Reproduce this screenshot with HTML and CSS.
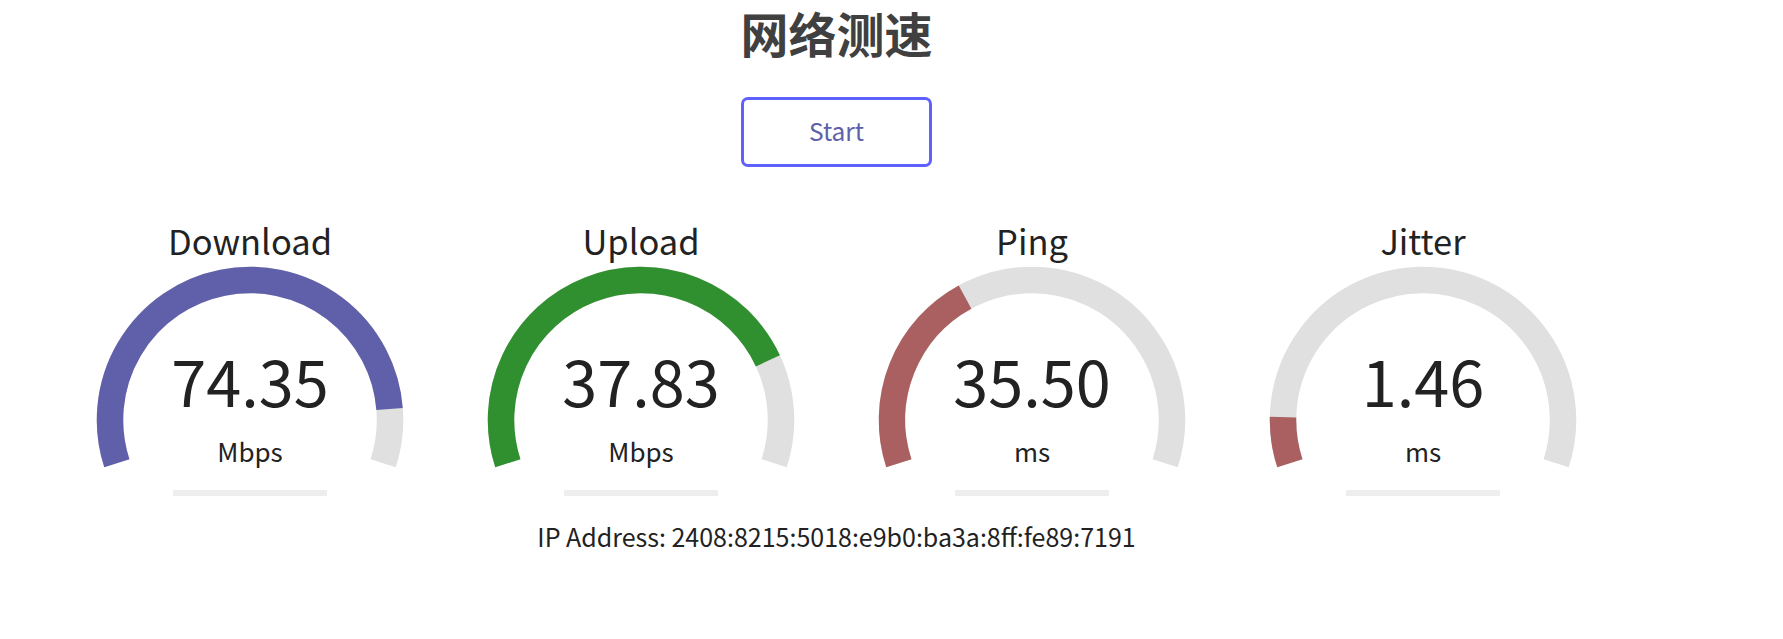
FILE: index.html
```html
<!DOCTYPE html>
<html lang="zh-CN">
<head>
<meta charset="utf-8">
<title>网络测速</title>
<link rel="stylesheet" href="styles.css">
</head>
<body>
<main class="page">
  <h1 class="title">网络测速</h1>
  <div class="start-btn">Start</div>
  <section class="tests">
    <div class="test">
      <div class="test-name">Download</div>
      <div class="meter">
        <svg class="gauge" viewBox="0 0 310 215" width="310" height="215">
          <path class="track" d="M21.85 204.26 A140 140 0 1 1 288.15 204.26"/>
          <path class="fill dl" d="M21.85 204.26 A140 140 0 1 1 294.57 150.04"/>
        </svg>
        <div class="readout">
          <div class="value">74.35</div>
          <div class="unit">Mbps</div>
        </div>
      </div>
      <div class="progress"></div>
    </div>
    <div class="test">
      <div class="test-name">Upload</div>
      <div class="meter">
        <svg class="gauge" viewBox="0 0 310 215" width="310" height="215">
          <path class="track" d="M21.85 204.26 A140 140 0 1 1 288.15 204.26"/>
          <path class="fill ul" d="M21.85 204.26 A140 140 0 0 1 281.87 101.82"/>
        </svg>
        <div class="readout">
          <div class="value">37.83</div>
          <div class="unit">Mbps</div>
        </div>
      </div>
      <div class="progress"></div>
    </div>
    <div class="test">
      <div class="test-name">Ping</div>
      <div class="meter">
        <svg class="gauge" viewBox="0 0 310 215" width="310" height="215">
          <path class="track" d="M21.85 204.26 A140 140 0 1 1 288.15 204.26"/>
          <path class="fill ping" d="M21.85 204.26 A140 140 0 0 1 88.08 38.03"/>
        </svg>
        <div class="readout">
          <div class="value">35.50</div>
          <div class="unit">ms</div>
        </div>
      </div>
      <div class="progress"></div>
    </div>
    <div class="test">
      <div class="test-name">Jitter</div>
      <div class="meter">
        <svg class="gauge" viewBox="0 0 310 215" width="310" height="215">
          <path class="track" d="M21.85 204.26 A140 140 0 1 1 288.15 204.26"/>
          <path class="fill ping" d="M21.85 204.26 A140 140 0 0 1 15.03 158.12"/>
        </svg>
        <div class="readout">
          <div class="value">1.46</div>
          <div class="unit">ms</div>
        </div>
      </div>
      <div class="progress"></div>
    </div>
  </section>
  <div class="ip">IP Address: 2408:8215:5018:e9b0:ba3a:8ff:fe89:7191</div>
</main>
</body>
</html>
```

FILE: styles.css
```css
html, body {
  margin: 0;
  padding: 0;
  background: #ffffff;
}

body {
  font-family: "Noto Sans CJK SC", "Noto Sans", sans-serif;
  color: #222222;
}

.page {
  width: 1673px;
  display: flex;
  flex-direction: column;
  align-items: center;
  text-align: center;
}

.title {
  margin: 0;
  font-size: 48px;
  line-height: 64px;
  font-weight: 700;
  color: #404040;
}

.start-btn {
  margin-top: 33px;
  box-sizing: border-box;
  width: 191px;
  height: 70px;
  border: 3px solid #6060ff;
  border-radius: 7px;
  color: #6060aa;
  font-size: 24.5px;
  line-height: 62px;
}

.tests {
  margin-top: 55px;
  display: grid;
  grid-template-columns: repeat(4, 391px);
}

.test {
  display: flex;
  flex-direction: column;
  align-items: center;
}

.test-name {
  font-size: 34.5px;
  line-height: 37px;
}

.meter {
  display: grid;
  width: 310px;
  height: 215px;
}

.gauge {
  grid-area: 1 / 1;
  display: block;
}

.gauge path {
  fill: none;
  stroke-width: 26.5;
}

.track { stroke: #e0e0e0; }
.fill.dl { stroke: #6060aa; }
.fill.ul { stroke: #309030; }
.fill.ping { stroke: #aa6060; }

.readout {
  grid-area: 1 / 1;
  display: flex;
  flex-direction: column;
  align-items: center;
  padding-top: 85px;
}

.value {
  font-size: 63px;
  line-height: 72px;
}

.unit {
  margin-top: 19px;
  font-size: 26px;
  line-height: 32px;
}

.progress {
  margin-top: 16px;
  width: 154px;
  height: 6px;
  background: #eeeeee;
}

.ip {
  margin-top: 24px;
  font-size: 25px;
  line-height: 32px;
}
```
